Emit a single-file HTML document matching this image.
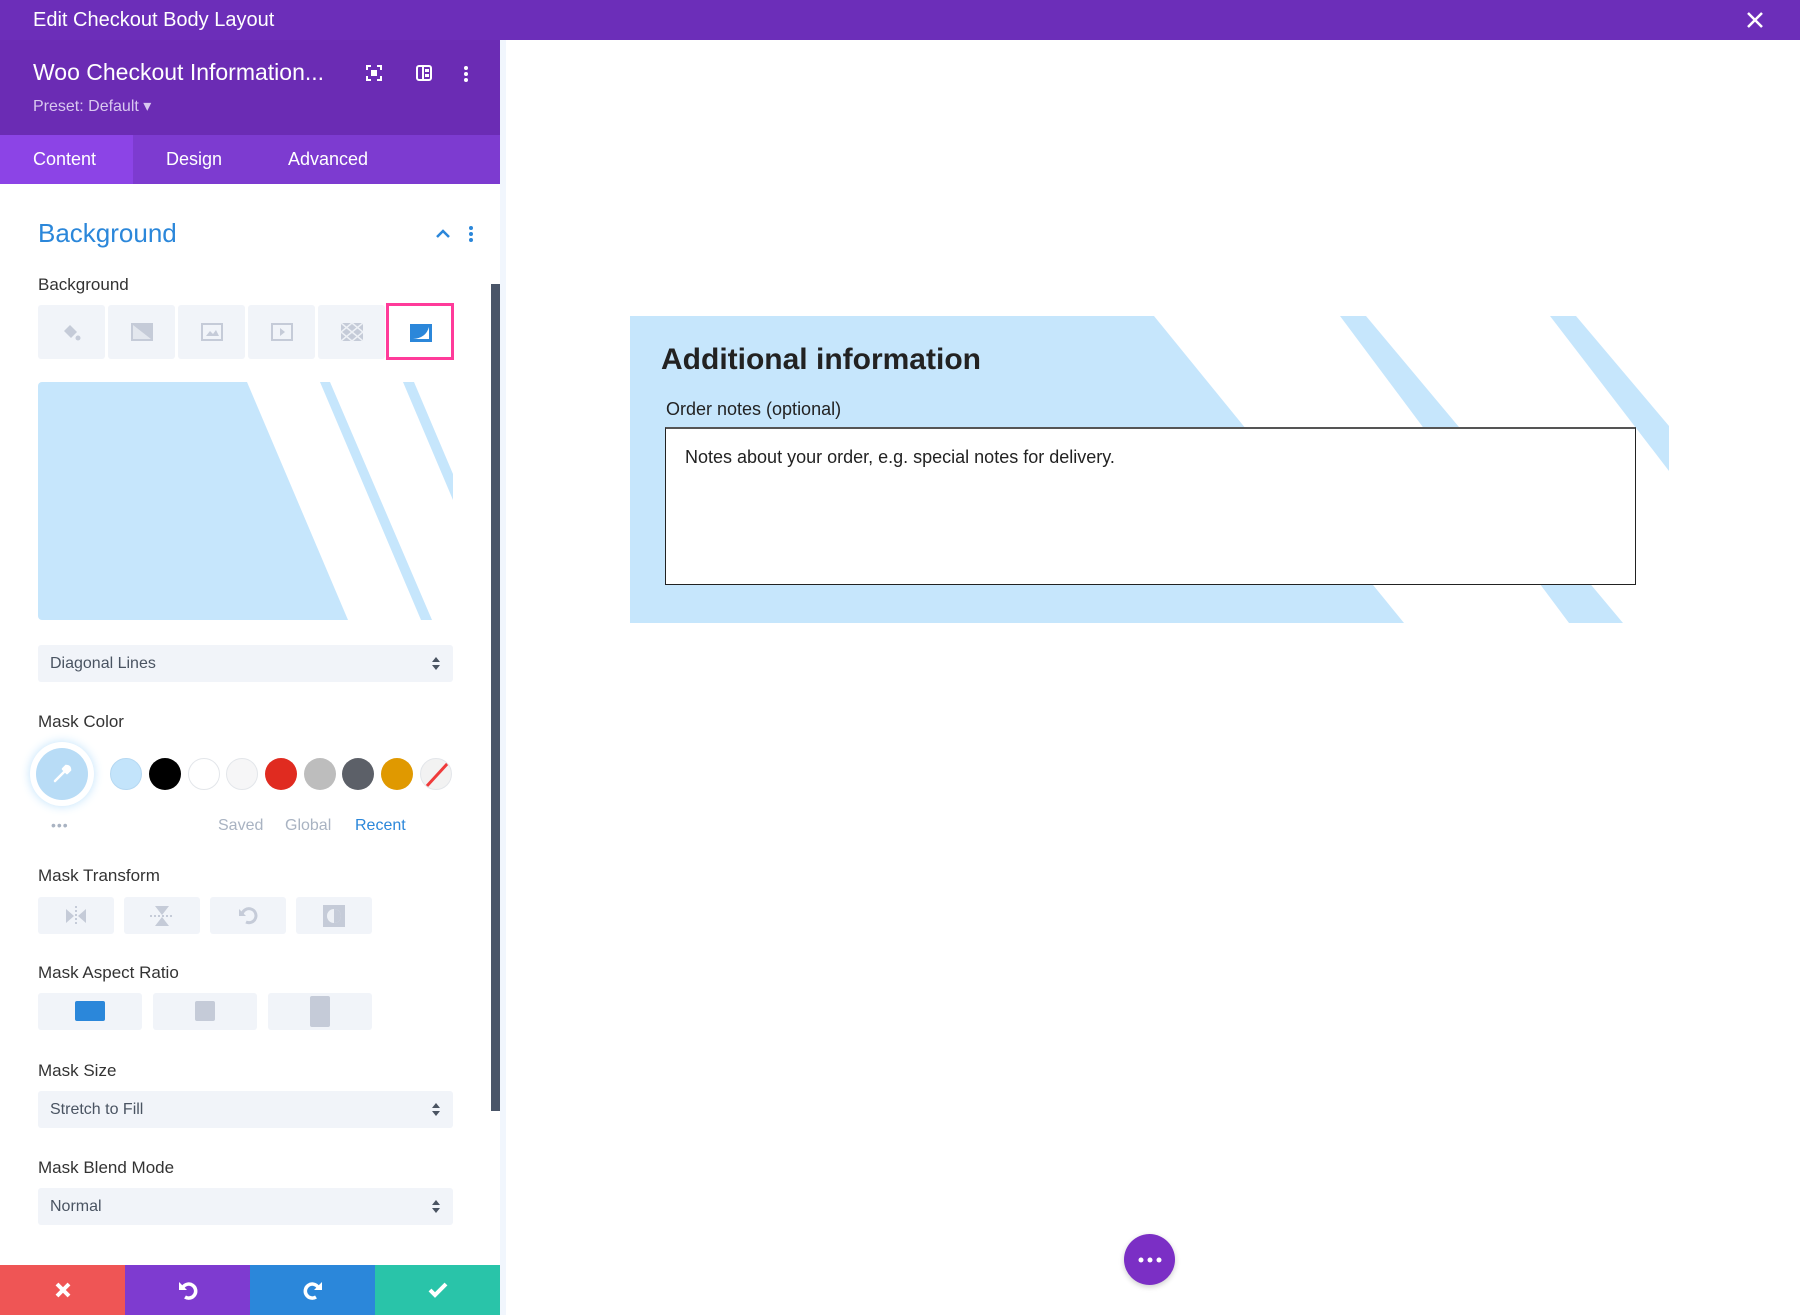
<!DOCTYPE html>
<html><head><meta charset="utf-8"><style>
*{box-sizing:border-box;margin:0;padding:0}
body{width:1800px;height:1315px;position:relative;overflow:hidden;background:#fff;font-family:"Liberation Sans",sans-serif}
.abs{position:absolute}
.top{left:0;top:0;width:1800px;height:40px;background:#6c2eb9;color:#fff;font-size:20px;line-height:40px;padding-left:33px}
.hdr{left:0;top:40px;width:500px;height:95px;background:#6b2cb4}
.tabs{left:0;top:135px;width:500px;height:49px;background:#7d3bd0}
.tab{position:absolute;top:0;height:49px;line-height:49px;color:#fff;font-size:18px}
.lbl{position:absolute;left:38px;color:#333;font-size:17px}
.btn{position:absolute;background:#f1f4f9;border-radius:3px}
.sel{position:absolute;left:38px;width:415px;height:37px;background:#f1f4f9;border-radius:3px;color:#4a5462;font-size:16px;line-height:37px;padding-left:12px}
.sel:after{content:"";position:absolute;right:13px;top:12px;border:4px solid transparent;border-bottom:5px solid #4a5462;border-top:none}
.sel:before{content:"";position:absolute;right:13px;top:20px;border:4px solid transparent;border-top:5px solid #4a5462;border-bottom:none}
.sw{position:absolute;top:758px;width:32px;height:32px;border-radius:50%}
.bb{position:absolute;top:1265px;height:50px;width:125px;display:flex;align-items:center;justify-content:center}
</style></head><body>
<div class="abs top">Edit Checkout Body Layout</div>
<svg class="abs" style="left:1746px;top:11px" width="18" height="18"><path d="M2 2L16 16M16 2L2 16" stroke="#fff" stroke-width="2.5"/></svg>
<div class="abs hdr">
 <div class="abs" style="left:33px;top:19px;color:#fff;font-size:23px">Woo Checkout Information...</div>
 <div class="abs" style="left:33px;top:56px;color:#d9c8f0;font-size:16px">Preset: Default ▾</div>
 <svg class="abs" style="left:366px;top:25px" width="16" height="16"><path d="M1 5V1H5M11 1H15V5M15 11V15H11M5 15H1V11" stroke="#fff" stroke-width="2" fill="none"/><rect x="5" y="5" width="6" height="6" fill="#fff"/></svg>
 <svg class="abs" style="left:416px;top:25px" width="16" height="16"><rect x="1" y="1" width="14" height="14" rx="2" fill="none" stroke="#fff" stroke-width="2"/><path d="M7 1V15" stroke="#fff" stroke-width="2"/><rect x="9" y="4" width="4" height="3" fill="#fff"/><rect x="9" y="9" width="4" height="3" fill="#fff"/></svg>
 <svg class="abs" style="left:462px;top:25px" width="8" height="18"><circle cx="4" cy="3" r="2" fill="#fff"/><circle cx="4" cy="9" r="2" fill="#fff"/><circle cx="4" cy="15" r="2" fill="#fff"/></svg>
</div>
<div class="abs tabs">
 <div class="tab" style="left:0;width:133px;background:#8c44e6;padding-left:33px">Content</div>
 <div class="tab" style="left:166px">Design</div>
 <div class="tab" style="left:288px">Advanced</div>
</div>
<div class="abs" style="left:38px;top:218px;color:#2b87da;font-size:26px">Background</div>
<svg class="abs" style="left:435px;top:227px" width="16" height="12"><path d="M2 10L8 4L14 10" stroke="#2b87da" stroke-width="2.5" fill="none"/></svg>
<svg class="abs" style="left:468px;top:225px" width="6" height="18"><circle cx="3" cy="3" r="2" fill="#2b87da"/><circle cx="3" cy="9" r="2" fill="#2b87da"/><circle cx="3" cy="15" r="2" fill="#2b87da"/></svg>
<div class="lbl" style="top:275px">Background</div>
<div class="btn" style="left:38px;top:305px;width:67px;height:54px"><svg style="margin:18px 0 0 23px" width="20" height="20"><path d="M3 8L9 2L16 9L10 15Z" fill="#c5cbd8"/><circle cx="17" cy="15" r="2.5" fill="#c5cbd8"/></svg></div>
<div class="btn" style="left:108px;top:305px;width:67px;height:54px"><svg style="margin:17px 0 0 22px" width="24" height="20"><rect x="1" y="1" width="22" height="18" fill="#c5cbd8"/><path d="M3 3L21 17H3Z" fill="#e3e7ee"/></svg></div>
<div class="btn" style="left:178px;top:305px;width:67px;height:54px"><svg style="margin:17px 0 0 22px" width="24" height="20"><rect x="2" y="2" width="20" height="16" fill="none" stroke="#c5cbd8" stroke-width="2"/><path d="M6 14L10 9L13 12L16 8L19 14Z" fill="#c5cbd8"/></svg></div>
<div class="btn" style="left:248px;top:305px;width:67px;height:54px"><svg style="margin:17px 0 0 22px" width="24" height="20"><rect x="2" y="2" width="20" height="16" fill="none" stroke="#c5cbd8" stroke-width="2"/><path d="M10 6L15 10L10 14Z" fill="#c5cbd8"/></svg></div>
<div class="btn" style="left:318px;top:305px;width:67px;height:54px"><svg style="margin:17px 0 0 22px" width="24" height="20"><rect x="1" y="1" width="22" height="18" fill="#c5cbd8"/><path d="M1 1L23 19M23 1L1 19M12 1L23 10L12 19L1 10Z" stroke="#eef1f6" stroke-width="1.5" fill="none"/></svg></div>
<div class="abs" style="left:386px;top:303px;width:68px;height:57px;border:3px solid #ff3b9a;background:#fff"><svg style="margin:17px 0 0 20px" width="24" height="20"><rect x="1" y="1" width="22" height="18" fill="#2b87da"/><path d="M4 16Q17 15 20 4V16Z" fill="#fff"/></svg></div>
<svg class="abs" style="left:38px;top:382px" width="415" height="238"><defs><clipPath id="c1"><rect width="415" height="238" rx="4"/></clipPath></defs><g clip-path="url(#c1)" fill="#c6e6fc"><polygon points="0,0 209,0 310,238 0,238"/><polygon points="282,0 292,0 394,238 383,238"/><polygon points="365,0 376,0 415,92 415,118"/></g></svg>
<div class="sel" style="top:645px">Diagonal Lines</div>
<div class="lbl" style="top:712px">Mask Color</div>
<div class="abs" style="left:30px;top:742px;width:64px;height:64px;border-radius:50%;background:#fff;box-shadow:0 0 10px #bfe2fb"><div style="margin:6px;width:52px;height:52px;border-radius:50%;background:#b8dcf6"><svg style="margin:14px" width="24" height="24"><path d="M5 19L15 9M13 7L17 11M16 4Q20 4 20 8L18 10L14 6Z" stroke="#fff" stroke-width="2.5" fill="#fff" stroke-linecap="round"/></svg></div></div>
<div class="abs" style="left:51px;top:817px;color:#a9b3c2;font-size:14px;letter-spacing:1px">•••</div>
<div class="sw" style="left:110px;background:#c3e4fb;border:1px solid #b5d8f2"></div>
<div class="sw" style="left:149px;background:#000"></div>
<div class="sw" style="left:188px;background:#fff;border:1px solid #e3e6ea"></div>
<div class="sw" style="left:226px;background:#f6f6f7;border:1px solid #e3e6ea"></div>
<div class="sw" style="left:265px;background:#e02b20"></div>
<div class="sw" style="left:304px;background:#bdbdbd"></div>
<div class="sw" style="left:342px;background:#5c6068"></div>
<div class="sw" style="left:381px;background:#e09900"></div>
<div class="sw" style="left:420px;background:#f2f2f2;border:1px solid #e3e6ea;overflow:hidden"><svg width="32" height="32"><path d="M27 4L5 28" stroke="#ef3b3b" stroke-width="3"/></svg></div>
<div class="abs" style="left:218px;top:817px;color:#a9b3c2;font-size:16px">Saved</div>
<div class="abs" style="left:285px;top:817px;color:#a9b3c2;font-size:16px">Global</div>
<div class="abs" style="left:355px;top:817px;color:#2b87da;font-size:16px">Recent</div>
<div class="lbl" style="top:866px">Mask Transform</div>
<div class="btn" style="left:38px;top:897px;width:76px;height:37px"><svg style="margin:9px 0 0 26px" width="24" height="20"><path d="M2 3L10 10L2 17Z M22 3L14 10L22 17Z" fill="#c5cbd8"/><path d="M12 0V20" stroke="#c5cbd8" stroke-width="2" stroke-dasharray="2 2"/></svg></div>
<div class="btn" style="left:124px;top:897px;width:76px;height:37px"><svg style="margin:8px 0 0 26px" width="24" height="22"><path d="M5 1H19L12 10Z M5 21H19L12 12Z" fill="#c5cbd8"/><path d="M0 11H24" stroke="#c5cbd8" stroke-width="2" stroke-dasharray="2 2"/></svg></div>
<div class="btn" style="left:210px;top:897px;width:76px;height:37px"><svg style="margin:9px 0 0 28px" width="20" height="20"><path d="M4 9A7 7 0 1 1 8 16" stroke="#c5cbd8" stroke-width="3" fill="none"/><path d="M1 3V10H8Z" fill="#c5cbd8"/></svg></div>
<div class="btn" style="left:296px;top:897px;width:76px;height:37px"><svg style="margin:7px 0 0 26px" width="24" height="24"><rect x="1" y="1" width="22" height="22" fill="#c5cbd8"/><circle cx="12" cy="12" r="7" fill="#eef1f6"/><path d="M12 5A7 7 0 0 1 12 19Z" fill="#c5cbd8"/></svg></div>
<div class="lbl" style="top:963px">Mask Aspect Ratio</div>
<div class="btn" style="left:38px;top:993px;width:104px;height:37px"><div style="margin:8px 0 0 37px;width:30px;height:20px;background:#2b87da;border-radius:2px"></div></div>
<div class="btn" style="left:153px;top:993px;width:104px;height:37px"><div style="margin:8px 0 0 42px;width:20px;height:20px;background:#c5cbd8;border-radius:2px"></div></div>
<div class="btn" style="left:268px;top:993px;width:104px;height:37px"><div style="margin:3px 0 0 42px;width:20px;height:31px;background:#c5cbd8;border-radius:2px"></div></div>
<div class="lbl" style="top:1061px">Mask Size</div>
<div class="sel" style="top:1091px">Stretch to Fill</div>
<div class="lbl" style="top:1158px">Mask Blend Mode</div>
<div class="sel" style="top:1188px">Normal</div>
<div class="abs" style="left:491px;top:284px;width:9px;height:827px;background:#4a5568"></div>
<div class="bb" style="left:0;background:#ef5555"><svg width="18" height="18"><path d="M3 3L15 15M15 3L3 15" stroke="#fff" stroke-width="4"/></svg></div>
<div class="bb" style="left:125px;background:#7e3bd0"><svg width="22" height="22"><path d="M6 8A7 7 0 1 1 8 18" stroke="#fff" stroke-width="3.5" fill="none"/><path d="M2 3V11H10Z" fill="#fff"/></svg></div>
<div class="bb" style="left:250px;background:#2b87da"><svg width="22" height="22"><path d="M16 8A7 7 0 1 0 14 18" stroke="#fff" stroke-width="3.5" fill="none"/><path d="M20 3V11H12Z" fill="#fff"/></svg></div>
<div class="bb" style="left:375px;background:#29c4a9"><svg width="20" height="16"><path d="M2 8L7 13L18 2" stroke="#fff" stroke-width="4" fill="none"/></svg></div>
<div class="abs" style="left:500px;top:40px;width:6px;height:1275px;background:#f1f6fd"></div>
<svg class="abs" style="left:630px;top:316px" width="1039" height="308"><g fill="#c6e6fc"><polygon points="0,0 524,0 774,307 0,307"/><polygon points="710,0 736,0 993,307 939,307"/><polygon points="920,0 946,0 1039,110 1039,155"/></g></svg>
<div class="abs" style="left:661px;top:343px;color:#222;font-size:30px;font-weight:bold">Additional information</div>
<div class="abs" style="left:666px;top:399px;color:#222;font-size:18px">Order notes (optional)</div>
<div class="abs" style="left:665px;top:427px;width:971px;height:158px;background:#fff;border:1px solid #222;border-top:2px solid #555"><div style="margin:18px 0 0 19px;color:#222;font-size:18px">Notes about your order, e.g. special notes for delivery.</div></div>
<div class="abs" style="left:1124px;top:1234px;width:51px;height:51px;border-radius:50%;background:#7b2fc5;box-shadow:0 2px 6px rgba(0,0,0,.2)"><svg style="margin:23px 0 0 14px" width="24" height="6"><circle cx="3" cy="3" r="2.5" fill="#fff"/><circle cx="12" cy="3" r="2.5" fill="#fff"/><circle cx="21" cy="3" r="2.5" fill="#fff"/></svg></div>
</body></html>
